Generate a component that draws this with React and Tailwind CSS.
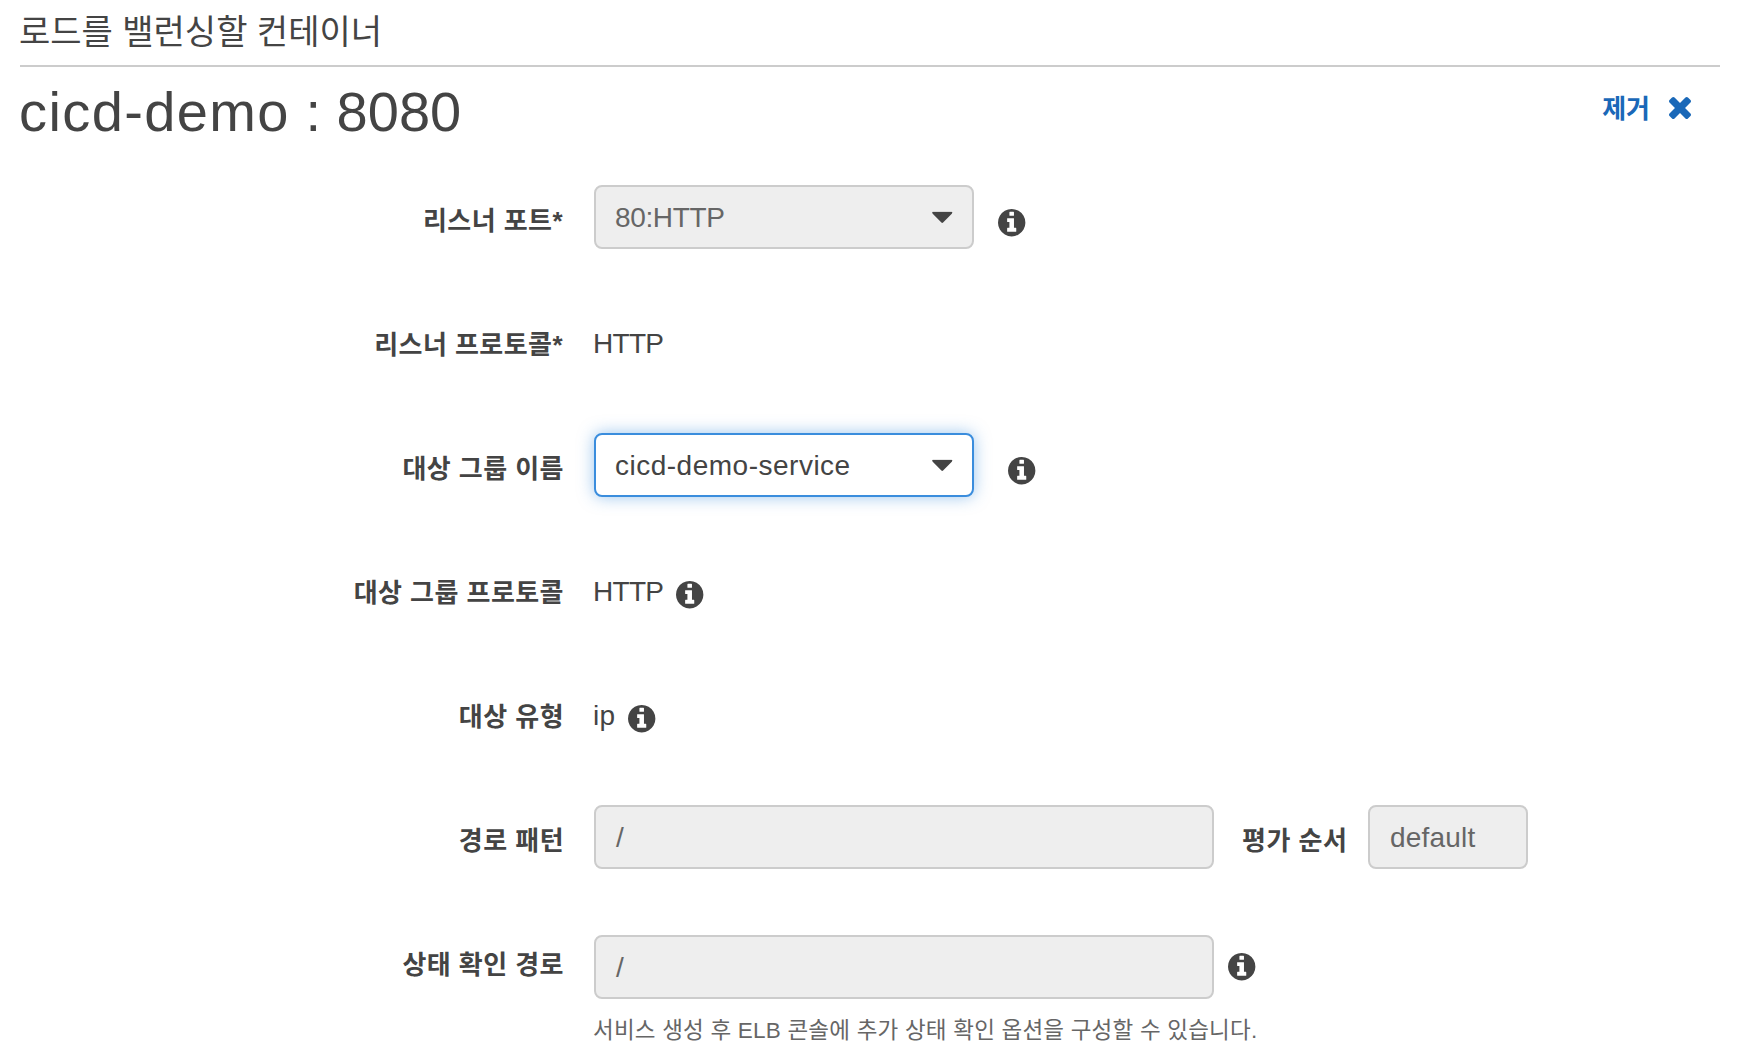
const FONT = "font-['Liberation_Sans','Noto_Sans_CJK_KR',sans-serif]";

function InfoIcon({ className }) {
  return (
    <svg viewBox="128 128 1536 1536" className={`h-[27.4px] w-[27.4px] shrink-0 fill-[#444] ${className}`}>
      <path d="M1152 1376v-160q0-14-9-23t-23-9h-96v-512q0-14-9-23t-23-9h-320q-14 0-23 9t-9 23v160q0 14 9 23t23 9h96v320h-96q-14 0-23 9t-9 23v160q0 14 9 23t23 9h448q14 0 23-9t9-23zM1024 480v-160q0-14-9-23t-23-9h-192q-14 0-23 9t-9 23v160q0 14 9 23t23 9h192q14 0 23-9t9-23zM1664 896q0 209-103 385.5t-279.5 279.5t-385.5 103t-385.5-103t-279.5-279.5t-103-385.5t103-385.5t279.5-279.5t385.5-103t385.5 103t279.5 279.5t103 385.5z" />
    </svg>
  );
}

function CloseIcon() {
  return (
    <svg viewBox="302 366 1188 1188" className="-mt-0.5 h-[22px] w-[22px] fill-[#1a68b8]">
      <path d="M1490 1322q0 40-28 68l-136 136q-28 28-68 28t-68-28l-294-294-294 294q-28 28-68 28t-68-28l-136-136q-28-28-28-68t28-68l294-294-294-294q-28-28-28-68t28-68l136-136q28-28 68-28t68 28l294 294 294-294q28-28 68-28t68 28l136 136q28 28 28 68t-28 68l-294 294 294 294q28 28 28 68z" />
    </svg>
  );
}

function Row({ label, required, children }) {
  return (
    <div className="flex h-[124px] items-start">
      <div className="w-[564px] shrink-0 pt-4 text-right text-[26px] leading-10 font-bold tracking-[0.45px] whitespace-nowrap">
        {label}
        {required && <span className="mr-px">*</span>}
      </div>
      <div className="ml-[30px] flex items-start">{children}</div>
    </div>
  );
}

function Select({ value, focused, className }) {
  return (
    <div
      className={`flex h-16 w-[380px] items-center justify-between rounded-lg border-2 px-[19px] text-[28px] leading-[60px] ${className} ${
        focused
          ? "border-[#3a8ddd] bg-white shadow-[0_0_16px_rgba(58,141,221,0.5)]"
          : "border-[#ccc] bg-[#eee] text-[#666]"
      }`}
    >
      <span className="pt-px">{value}</span>
      <svg viewBox="0 0 21 12" className="h-3 w-[21px] translate-y-[0.4px] fill-[#444]">
        <path d="M1 .3h18.500q.8 0 .8.9 0 .6-.5 1.100l-8.700 8.900q-.9.800-1.700 0L.7 2.300Q.200 1.800.200 1.200.200.300 1 .300z" />
      </svg>
    </div>
  );
}

function Field({ value, className }) {
  return (
    <div className={`h-16 rounded-lg border-2 border-[#ccc] bg-[#eee] pl-5 text-[28px] leading-[62px] tracking-[0.2px] text-[#666] ${className}`}>
      {value}
    </div>
  );
}

function Value({ children, className }) {
  return <span className={`-ml-px pt-[17px] text-[28px] leading-9 ${className}`}>{children}</span>;
}

export default function App() {
  return (
    <main className={`h-[1060px] w-[1744px] overflow-hidden bg-white text-[#444] ${FONT}`}>
      <div className="mx-5 h-[67px] w-[1700px] border-b-2 border-[#ccc] pt-[9px]">
        <h2 className="-ml-px text-[34px] leading-[46px] whitespace-nowrap">로드를 밸런싱할 컨테이너</h2>
      </div>
      <div className="mx-5 flex h-[118px] w-[1700px] items-start justify-between">
        <h1 className="-ml-px pt-3 text-[56px] leading-[66px] whitespace-nowrap">
          <span className="tracking-[1.4px]">cicd-demo</span> : 8080
        </h1>
        <div className="mt-[22px] mr-[29px] flex items-center gap-[19px] text-[26px] leading-10 font-bold text-[#1a68b8]">
          <span>제거</span>
          <CloseIcon />
        </div>
      </div>
      <Row label="리스너 포트" required>
        <Select value="80:HTTP" className="tracking-[-0.35px]" />
        <InfoIcon className="mt-[24.3px] ml-[24.4px]" />
      </Row>
      <Row label="리스너 프로토콜" required>
        <Value className="tracking-[-0.7px]">HTTP</Value>
      </Row>
      <Row label="대상 그룹 이름">
        <Select value="cicd-demo-service" focused className="tracking-[0.5px]" />
        <InfoIcon className="mt-[24.3px] ml-[34.4px]" />
      </Row>
      <Row label="대상 그룹 프로토콜">
        <Value className="w-[71px] tracking-[-0.7px]">HTTP</Value>
        <InfoIcon className="mt-[24.4px] ml-[12.4px]" />
      </Row>
      <Row label="대상 유형">
        <Value className="w-[23px] tracking-[0.4px]">ip</Value>
        <InfoIcon className="mt-[24.4px] ml-[12.4px]" />
      </Row>
      <Row label="경로 패턴">
        <Field value="/" className="w-[620px]" />
        <span className="mr-5 ml-[28px] w-[106px] pt-4 text-[26px] leading-10 font-bold tracking-[0.5px] whitespace-nowrap">평가 순서</span>
        <Field value="default" className="w-[160px]" />
      </Row>
      <Row label="상태 확인 경로">
        <div className="pt-1.5">
          <div className="flex items-start">
            <Field value="/" className="w-[620px]" />
            <InfoIcon className="mt-[18.3px] ml-[14.4px]" />
          </div>
          <p className="-ml-px pt-3.5 text-[22.5px] leading-9 tracking-[0.21px] whitespace-nowrap text-[#666]">
            서비스 생성 후 ELB 콘솔에 추가 상태 확인 옵션을 구성할 수 있습니다.
          </p>
        </div>
      </Row>
    </main>
  );
}
